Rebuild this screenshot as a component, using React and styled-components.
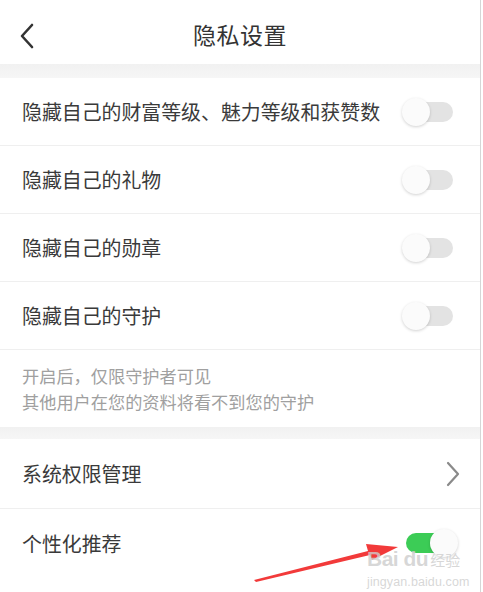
import React from "react";
import styled, { createGlobalStyle } from "styled-components";

const Global = createGlobalStyle`
  html, body { margin: 0; padding: 0; background: #fff; }
  body { font-family: "Noto Sans CJK SC", "Noto Sans", sans-serif; }
`;

const Page = styled.div`
  position: relative;
  width: 480px;
  height: 592px;
  border-right: 1px solid #d6d6d6;
  background: #fff;
  overflow: hidden;
`;

const Header = styled.div`
  height: 64px;
  display: flex;
  align-items: center;
  justify-content: center;
  position: relative;
  padding-top: 4px;
  box-sizing: border-box;
`;

const Back = styled.div`
  position: absolute;
  left: 17px;
  top: 23px;
  width: 22px;
  height: 26px;
  display: flex;
`;

const Title = styled.div`
  font-size: 23px;
  color: #333;
  letter-spacing: 0.5px;
`;

const Band = styled.div`
  height: ${(p) => p.h}px;
  background: linear-gradient(#f1f1f1, #f6f6f6);
`;

const Row = styled.div`
  height: ${(p) => p.h || 68}px;
  display: flex;
  align-items: center;
  justify-content: space-between;
  padding: 0 27px 0 22px;
  box-sizing: border-box;
  border-bottom: ${(p) => (p.last ? "none" : "1px solid #efefef")};
`;

const Label = styled.div`
  font-size: 19.9px;
  color: #3a3a3a;
`;

const Track = styled.div`
  position: relative;
  width: 49px;
  height: 20px;
  border-radius: 10px;
  background: ${(p) => (p.on ? "#3ccc56" : "#e3e3e3")};
  margin-right: ${(p) => (p.on ? "-2px" : "0")};
`;

const Knob = styled.div`
  position: absolute;
  top: -4px;
  ${(p) => (p.on ? "right: -3px;" : "left: -2px;")}
  width: 28px;
  height: 28px;
  border-radius: 50%;
  background: #fbfbfb;
  box-shadow: 0 1px 3px rgba(0, 0, 0, 0.18);
`;

const Chevron = styled.svg`
  margin-right: -8px;
`;

const Note = styled.div`
  height: 77px;
  padding: 13px 22px 0;
  box-sizing: border-box;
  font-size: 17.2px;
  line-height: 26px;
  color: #a0a0a0;
`;

const Arrow = styled.svg`
  position: absolute;
  left: 250px;
  top: 535px;
`;

const Watermark = styled.div`
  position: absolute;
  left: 367px;
  top: 548px;
  display: flex;
  flex-direction: column;
  align-items: flex-start;
  color: rgba(205, 205, 205, 0.8);
  font-family: "Liberation Sans", sans-serif;
  pointer-events: none;
`;

const WmMain = styled.div`
  font-size: 21px;
  font-weight: bold;
  letter-spacing: -0.5px;
  line-height: 22px;
  display: flex;
  gap: 2px;
  align-items: baseline;
`;

const WmCn = styled.span`
  font-family: "Noto Sans CJK SC", sans-serif;
  font-size: 15px;
  font-weight: normal;
  letter-spacing: 0;
`;

const WmUrl = styled.div`
  font-size: 12.5px;
  margin-top: 4px;
  letter-spacing: 0.1px;
`;

const Toggle = ({ on }) => (
  <Track on={on ? 1 : 0}>
    <Knob on={on ? 1 : 0} />
  </Track>
);

const ChevronRight = () => (
  <Chevron width="16" height="26" viewBox="0 0 16 26">
    <path d="M3 2 L13 13 L3 24" fill="none" stroke="#8a8a8a" strokeWidth="2.2" strokeLinecap="round" strokeLinejoin="round" />
  </Chevron>
);

export default function App() {
  return (
    <>
      <Global />
      <Page>
        <Header>
          <Back>
            <svg width="22" height="26" viewBox="0 0 22 26">
              <path d="M15 2 L5 13 L15 24" fill="none" stroke="#333" strokeWidth="2.6" strokeLinecap="round" strokeLinejoin="round" />
            </svg>
          </Back>
          <Title>隐私设置</Title>
        </Header>
        <Band h={14} />
        <Row>
          <Label>隐藏自己的财富等级、魅力等级和获赞数</Label>
          <Toggle />
        </Row>
        <Row>
          <Label>隐藏自己的礼物</Label>
          <Toggle />
        </Row>
        <Row>
          <Label>隐藏自己的勋章</Label>
          <Toggle />
        </Row>
        <Row>
          <Label>隐藏自己的守护</Label>
          <Toggle />
        </Row>
        <Note>
          开启后，仅限守护者可见
          <br />
          其他用户在您的资料将看不到您的守护
        </Note>
        <Band h={12} />
        <Row h={70}>
          <Label>系统权限管理</Label>
          <ChevronRight />
        </Row>
        <Row h={68} last>
          <Label>个性化推荐</Label>
          <Toggle on />
        </Row>
        <Arrow width="150" height="50" viewBox="0 0 150 50">
          <polygon points="4,45 118,16 116,9 148,12 122,25 120,20 6,47" fill="#f23a3a" />
        </Arrow>
        <Watermark>
          <WmMain>
            <span>Bai du</span>
            <WmCn>经验</WmCn>
          </WmMain>
          <WmUrl>jingyan.baidu.com</WmUrl>
        </Watermark>
      </Page>
    </>
  );
}
